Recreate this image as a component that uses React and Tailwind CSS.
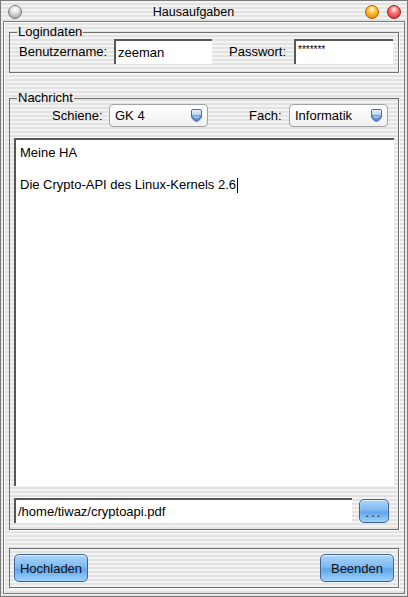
import React from 'react'

const STRIPES = 'bg-[repeating-linear-gradient(to_bottom,#f3f3f3_0px,#f3f3f3_2px,#e2e2e2_2px,#e2e2e2_4px)]'

function Shield() {
  return (
    <svg width="11" height="13" viewBox="0 0 11 13">
      <defs>
        <linearGradient id="shieldFill" x1="0" y1="0" x2="0" y2="1">
          <stop offset="0" stopColor="#eef4fc" />
          <stop offset="0.45" stopColor="#b9d0f0" />
          <stop offset="0.5" stopColor="#6f9fe0" />
          <stop offset="1" stopColor="#4d86d8" />
        </linearGradient>
      </defs>
      <path
        d="M1.8 0.5h7.4a1.3 1.3 0 0 1 1.3 1.3v5.2c0 2.6-2.4 4.6-5 5.5-2.6-0.9-5-2.9-5-5.5v-5.2a1.3 1.3 0 0 1 1.3-1.3z"
        fill="url(#shieldFill)"
        stroke="#4a6c9e"
        strokeWidth="1"
      />
      <path d="M3 7.5q2.5 2 5 0" stroke="#d9e8fb" strokeWidth="1" fill="none" />
    </svg>
  )
}

function Combo({ value }) {
  return (
    <div className="flex h-[23px] w-[99px] items-center justify-between rounded-[4px] border border-[#a3a3a3] bg-[linear-gradient(to_bottom,#ffffff,#f1f1f1)] pl-[5px] pr-[5px] shadow-[inset_0_1px_0_#fff]">
      <span className="text-[13px] leading-none text-black">{value}</span>
      <Shield />
    </div>
  )
}

function Field({ value, className, small }) {
  return (
    <div className={`flex h-[25px] items-center border-l-2 border-t-2 border-[#585858] bg-white pl-[2px] ${className}`}>
      <span className={small ? 'mb-[6px] text-[10px] leading-none text-black' : 'text-[13px] leading-none text-black'}>{value}</span>
    </div>
  )
}

function GelButton({ children, className }) {
  return (
    <button className={`flex items-center justify-center rounded-[5px] border border-[#40628e] bg-[linear-gradient(to_bottom,#a9d4fa_0%,#7fbaf2_45%,#5fa6ec_55%,#9ed3fb_100%)] text-[13px] leading-none text-[#111] shadow-[inset_0_1px_1px_rgba(255,255,255,0.7)] ${className}`}>
      {children}
    </button>
  )
}

function Light({ from, to, border }) {
  return (
    <div
      className="h-[14px] w-[14px] rounded-full border"
      style={{
        borderColor: border,
        background: `radial-gradient(circle at 50% 30%, #ffffff 0%, ${from} 35%, ${to} 100%)`,
      }}
    />
  )
}

export default function App() {
  return (
    <div
      className={`flex h-[597px] w-[408px] flex-col border border-[#7a7a7a] ${STRIPES}`}
      style={{ fontFamily: '"Liberation Sans", Arial, sans-serif' }}
    >
      {/* title bar */}
      <div className="flex h-[20px] items-center pl-[7px] pr-[6px] pt-[2px]">
        <Light from="#e4e4e4" to="#8c8c8c" border="#7a7a7a" />
        <div className="flex-1 text-center text-[12.5px] leading-none text-black">Hausaufgaben</div>
        <div className="flex gap-[8px]">
          <Light from="#ffc23a" to="#d97a00" border="#a86400" />
          <Light from="#ff7a7a" to="#cc1f1f" border="#9a1a1a" />
        </div>
      </div>

      <div className="mx-[2px] mb-[2px] flex flex-1 flex-col border border-[#7a7a7a] px-[5px] pt-[3px] shadow-[inset_1px_1px_0_#ffffff]">
        {/* Logindaten */}
        <fieldset className="border border-[#6e6e6e] pb-[8px] pl-[9px] pr-[5px] shadow-[1px_1px_0_#ffffff]">
          <legend className="-ml-[2px] px-[1px] text-[13px] leading-[14px] text-black">Logindaten</legend>
          <div className="flex items-center">
            <span className="w-[95px] text-[13px] leading-none text-black">Benutzername:</span>
            <Field value="zeeman" className="w-[98px]" />
            <span className="ml-[17px] w-[65px] text-[13px] leading-none text-black">Passwort:</span>
            <Field value="*******" className="w-[99px]" small />
          </div>
        </fieldset>

        {/* Nachricht */}
        <fieldset className="mt-[19px] flex flex-col border border-[#6e6e6e] pb-[6px] pl-[4px] pr-[4px] shadow-[1px_1px_0_#ffffff]">
          <legend className="ml-[3px] px-[1px] text-[13px] leading-[12px] text-black">Nachricht</legend>
          <div className="flex items-center pl-[38px]">
            <span className="w-[57px] text-[13px] leading-none text-black">Schiene:</span>
            <Combo value="GK 4" />
            <span className="ml-[41px] w-[40px] text-[13px] leading-none text-black">Fach:</span>
            <Combo value="Informatik" />
          </div>
          <div className="mt-[11px] h-[348px] w-[380px] border-l-2 border-t-2 border-[#585858] bg-white px-[4px] pt-[5px] text-[13px] leading-[16px] text-black">
            <div>Meine HA</div>
            <div className="h-[16px]" />
            <div className="flex items-center">
              Die Crypto-API des Linux-Kernels 2.6
              <span className="ml-[1px] inline-block h-[15px] w-px bg-black" />
            </div>
          </div>
          <div className="mt-[12px] flex items-center">
            <Field value="/home/tiwaz/cryptoapi.pdf" className="w-[338px]" />
            <GelButton className="ml-[7px] h-[24px] w-[30px] pt-[4px] text-[11px] tracking-[2px]">...</GelButton>
          </div>
        </fieldset>

        {/* Bottom buttons */}
        <div className="mt-[18px] flex h-[40px] items-center justify-between border border-[#6e6e6e] px-[4px] shadow-[1px_1px_0_#ffffff]">
          <GelButton className="h-[28px] w-[74px]">Hochladen</GelButton>
          <GelButton className="h-[28px] w-[74px]">Beenden</GelButton>
        </div>
      </div>
    </div>
  )
}
